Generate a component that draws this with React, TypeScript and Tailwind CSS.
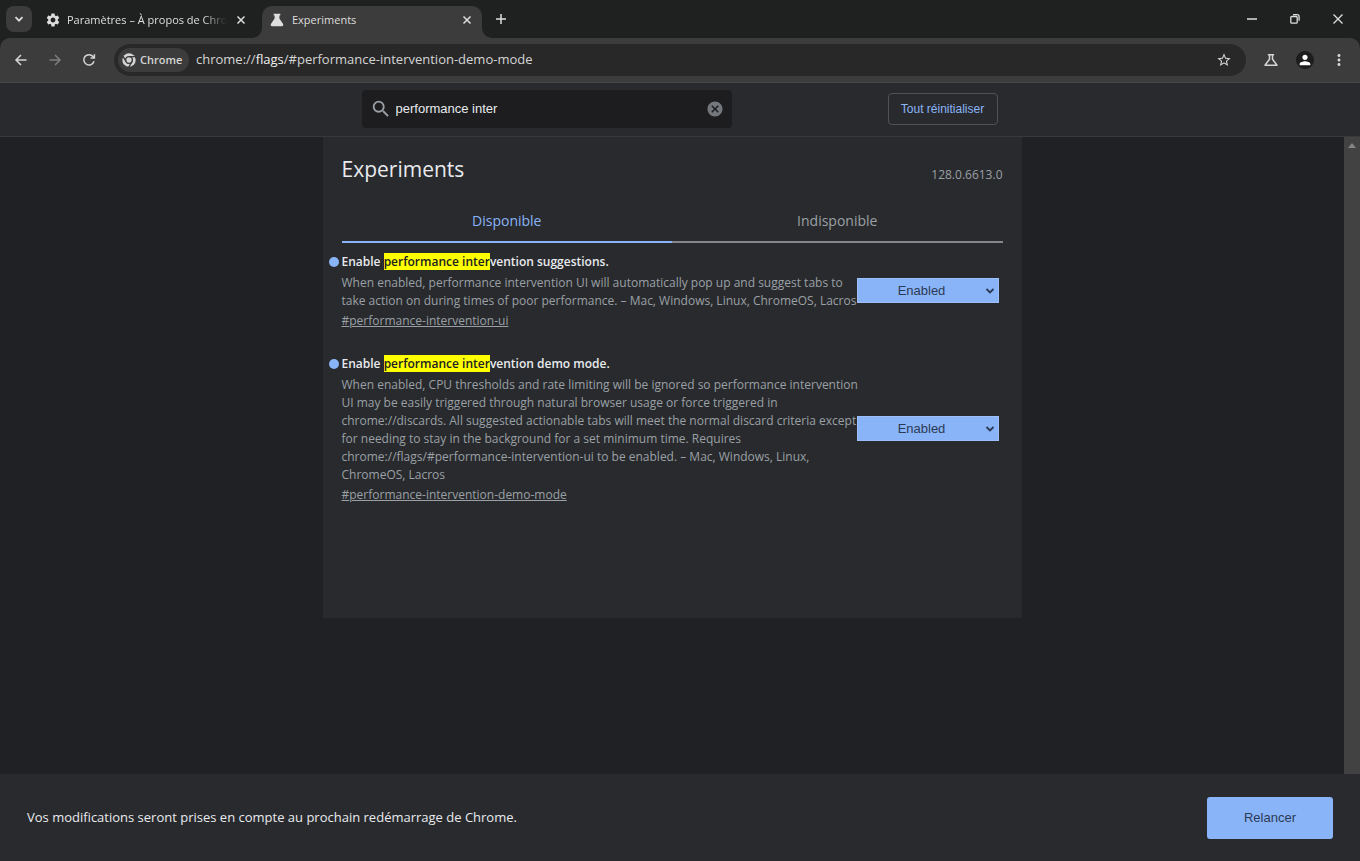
import React, { useState } from "react";
import { MdSettings, MdStarBorder, MdOutlineScience, MdPerson, MdMoreVert, MdSearch, MdCancel } from "react-icons/md";

interface Experiment {
  id: string;
  before: string;
  match: string;
  after: string;
  lines: string[];
}

const experiments: Experiment[] = [
  {
    id: "performance-intervention-ui",
    before: "Enable ",
    match: "performance inter",
    after: "vention suggestions.",
    lines: [
      "When enabled, performance intervention UI will automatically pop up and suggest tabs to",
      "take action on during times of poor performance. – Mac, Windows, Linux, ChromeOS, Lacros",
    ],
  },
  {
    id: "performance-intervention-demo-mode",
    before: "Enable ",
    match: "performance inter",
    after: "vention demo mode.",
    lines: [
      "When enabled, CPU thresholds and rate limiting will be ignored so performance intervention",
      "UI may be easily triggered through natural browser usage or force triggered in",
      "chrome://discards. All suggested actionable tabs will meet the normal discard criteria except",
      "for needing to stay in the background for a set minimum time. Requires",
      "chrome://flags/#performance-intervention-ui to be enabled. – Mac, Windows, Linux,",
      "ChromeOS, Lacros",
    ],
  },
];

function Icon({ d, size = 14, width = 1.5 }: { d: string; size?: number; width?: number }) {
  return (
    <svg width={size} height={size} viewBox="0 0 14 14" fill="none" stroke="currentColor" strokeWidth={width}>
      <path d={d} />
    </svg>
  );
}

function Flare({ flip }: { flip?: boolean }) {
  return (
    <svg
      width="10"
      height="10"
      viewBox="0 0 10 10"
      className={flip ? "absolute bottom-0 left-full -scale-x-100 text-[#3c3c3c]" : "absolute bottom-0 right-full text-[#3c3c3c]"}
    >
      <path d="M10 0v10H0A10 10 0 0 0 10 0z" fill="currentColor" />
    </svg>
  );
}

function ChromeLogo() {
  return (
    <svg width="14" height="14" viewBox="0 0 24 24" className="shrink-0">
      <circle cx="12" cy="12" r="11.5" fill="currentColor" />
      <g fill="none" stroke="#3c3c3c" strokeWidth="2.4">
        <circle cx="12" cy="12" r="5.8" />
        <path d="M12 6.2h11M7 14.9 1.500 5.400M17 14.900 11.500 24.400" />
      </g>
    </svg>
  );
}

function TabStrip() {
  return (
    <div className="flex h-[38px] items-end bg-[#1f2120] text-[#dedede]">
      <button aria-label="Rechercher des onglets" className="mb-1.5 ml-1.5 flex size-[26px] items-center justify-center rounded-lg bg-[#3c3c3c]">
        <Icon d="M3.5 5.2 7 8.7l3.5-3.5" width={1.8} />
      </button>

      <div className="flex h-8 w-[230px] items-center pl-[13px] pr-3.5 pb-1">
        <MdSettings className="size-4 shrink-0" />
        <span className="ml-1.5 whitespace-nowrap text-[11px] [mask-image:linear-gradient(to_right,#000_85%,transparent)]">
          Paramètres – À propos de Chro
        </span>
        <button aria-label="Fermer l'onglet" className="ml-auto">
          <Icon d="m3.5 3.5 7 7m0-7-7 7" />
        </button>
      </div>

      <div className="relative flex h-8 w-[220px] items-center rounded-t-[10px] bg-[#3c3c3c] px-2 pb-1">
        <Flare />
        <svg width="14" height="14" viewBox="0 0 14 14" fill="currentColor">
          <path d="M3.7.8h6.6v1.6H9.4v3.1l3.7 5.6c.6 1-.1 2.1-1.2 2.1H2.1C1 13.2.3 12.1.9 11.1l3.7-5.6V2.4h-.9z" />
        </svg>
        <span className="ml-2 text-[11px]">Experiments</span>
        <button aria-label="Fermer l'onglet" className="ml-auto">
          <Icon d="m3.5 3.5 7 7m0-7-7 7" />
        </button>
        <Flare flip />
      </div>

      <button aria-label="Nouvel onglet" className="mb-3 ml-3">
        <Icon d="M7 2v10M2 7h10" />
      </button>

      <div className="mb-3 ml-auto mr-[15px] flex items-center gap-[29px]">
        <button aria-label="Réduire">
          <Icon d="M2 7h10" />
        </button>
        <button aria-label="Restaurer">
          <Icon d="M3.800 4.500h4.400a1 1 0 0 1 1 1v4.700a1 1 0 0 1-1 1H3.800a1 1 0 0 1-1-1V5.500a1 1 0 0 1 1-1zM5 2.600h4.100a2 2 0 0 1 2 2v4.200" width={1.3} />
        </button>
        <button aria-label="Fermer">
          <Icon d="m2.500 2.500 9 9m0-9-9 9" width={1.3} />
        </button>
      </div>
    </div>
  );
}

function Toolbar() {
  return (
    <div className="bg-[#1f2120]">
      <div className="flex h-[45px] items-center rounded-t-[10px] border-b border-[#48494b] bg-[#3c3c3c] pl-3.5 text-[#d5d5d5]">
        <div className="flex w-[100px] items-center gap-5">
          <button aria-label="Retour">
            <Icon d="M12.500 7H2m5-5L2 7l5 5" />
          </button>
          <button aria-label="Avancer" className="text-[#7d7d7d]">
            <Icon d="M1.500 7H12M7 2l5 5-5 5" />
          </button>
          <button aria-label="Actualiser">
            <Icon d="M12 8.300A5.200 5.200 0 1 1 11 3.500l1.200 1.300M12.400 1.300v3.800H8.600" />
          </button>
        </div>

        <div className="flex h-8 flex-1 items-center rounded-full bg-[#282828] pl-1 pr-3.5">
          <span className="flex h-6 w-[71px] items-center gap-1 rounded-full bg-[#3c3c3c] pl-1 text-[11px] font-semibold">
            <ChromeLogo />
            Chrome
          </span>
          <div className="ml-[7px] flex-1 text-[13px]">
            chrome://<span className="text-[#f0f0f0]">flags</span>/#performance-intervention-demo-mode
          </div>
          <button aria-label="Ajouter aux favoris">
            <MdStarBorder className="size-4" />
          </button>
        </div>

        <div className="flex items-center gap-4 pl-4 pr-3">
          <button aria-label="Chrome Labs">
            <MdOutlineScience className="size-[18px]" />
          </button>
          <button aria-label="Profil" className="flex size-[18px] items-center justify-center rounded-full bg-[#1d1d1d] text-white">
            <MdPerson className="size-4" />
          </button>
          <button aria-label="Menu">
            <MdMoreVert className="size-[18px]" />
          </button>
        </div>
      </div>
    </div>
  );
}

function SearchHeader() {
  const [query, setQuery] = useState("performance inter");

  return (
    <header className="border-b border-[#38393c] bg-[#292a2d] pr-4 font-['Liberation_Sans',sans-serif]">
      <div className="mx-auto flex h-[53px] max-w-[699px] items-center justify-between pb-0.5 pl-[39px] pr-6">
        <div className="flex h-[38px] w-[370px] items-center rounded-sm bg-[#1d1d1f] px-2">
          <MdSearch className="size-[22px] text-[#9aa0a6]" />
          <input
            aria-label="Rechercher des experiments"
            value={query}
            onChange={(e) => setQuery(e.target.value)}
            className="ml-1 min-w-0 flex-1 bg-transparent text-[13px] text-[#e8eaed] outline-none"
          />
          <button aria-label="Effacer" onClick={() => setQuery("")}>
            <MdCancel className="size-[18px] text-[#74777b]" />
          </button>
        </div>
        <button className="h-8 w-[110px] rounded-sm border border-[#505256] text-[12px] text-[#8ab4f8]">Tout réinitialiser</button>
      </div>
    </header>
  );
}

function ExperimentRow({ exp }: { exp: Experiment }) {
  return (
    <div className="flex items-center justify-between pr-1">
      <div className="w-[515px] whitespace-nowrap text-[12px] leading-[18px] text-[#9aa0a6]">
        <h3 className="relative mb-[3px] font-semibold text-[#e8eaed]">
          <span className="absolute -left-[13px] top-1 size-2.5 rounded-full bg-[#8ab4f8]" />
          <label htmlFor={exp.id}>
            {exp.before}
            <mark className="bg-[#ffff00] text-[#202124]">{exp.match}</mark>
            {exp.after}
          </label>
        </h3>
        <p>
          {exp.lines.map((line) => (
            <span key={line} className="block">
              {line}
            </span>
          ))}
        </p>
        <a href={"#" + exp.id} className="mt-0.5 inline-block underline">
          #{exp.id}
        </a>
      </div>
      <div className="relative w-[142px] shrink-0 pb-0.5 font-['Liberation_Sans',sans-serif] text-[#2b3a55]">
        <select
          id={exp.id}
          defaultValue="Enabled"
          className="block h-[25px] w-full appearance-none border border-[#9dbff9] bg-[#8ab4f8] pr-3 text-center text-[13px]"
        >
          <option>Default</option>
          <option>Enabled</option>
          <option>Disabled</option>
        </select>
        <span className="pointer-events-none absolute right-0.5 top-1.5">
          <Icon d="M3.500 5 7 8.500 10.500 5" width={1.8} />
        </span>
      </div>
    </div>
  );
}

export default function App() {
  return (
    <div className="flex min-h-screen flex-col bg-[#202124] font-['Open_Sans',sans-serif]">
      <TabStrip />
      <Toolbar />
      <SearchHeader />

      <div className="flex flex-1">
        <main className="flex-1">
          <div className="mx-auto min-h-[481px] max-w-[699px] bg-[#292a2d] px-[19px] pt-4">
            <div className="flex items-end justify-between">
              <h1 className="text-[21px] leading-8 text-[#e8eaed]">Experiments</h1>
              <span className="text-[12px] leading-5 text-[#9aa0a6]">128.0.6613.0</span>
            </div>
            <div role="tablist" className="mt-3.5 grid grid-cols-2 text-[14px]">
              <button role="tab" aria-selected="true" className="h-11 border-b-2 border-[#8ab4f8] text-[#8ab4f8]">
                Disponible
              </button>
              <button role="tab" aria-selected="false" className="h-11 border-b-2 border-[#83868a] text-[#9aa0a6]">
                Indisponible
              </button>
            </div>
            <div className="flex flex-col gap-[25px] pt-2.5">
              {experiments.map((exp) => (
                <ExperimentRow key={exp.id} exp={exp} />
              ))}
            </div>
          </div>
        </main>
        <div className="w-4 bg-[#424242] pt-1.5">
          <svg width="16" height="6" viewBox="0 0 16 6">
            <path d="M8 0l4 5H4z" fill="#858585" />
          </svg>
        </div>
      </div>

      <footer className="flex h-[87px] items-center justify-between bg-[#292a2d] px-[27px]">
        <span className="text-[13px] text-[#e8eaed]">Vos modifications seront prises en compte au prochain redémarrage de Chrome.</span>
        <button className="h-[42px] w-[126px] rounded-[3px] bg-[#8ab4f8] font-['Liberation_Sans',sans-serif] text-[13px] text-[#2b3a55]">
          Relancer
        </button>
      </footer>
    </div>
  );
}
